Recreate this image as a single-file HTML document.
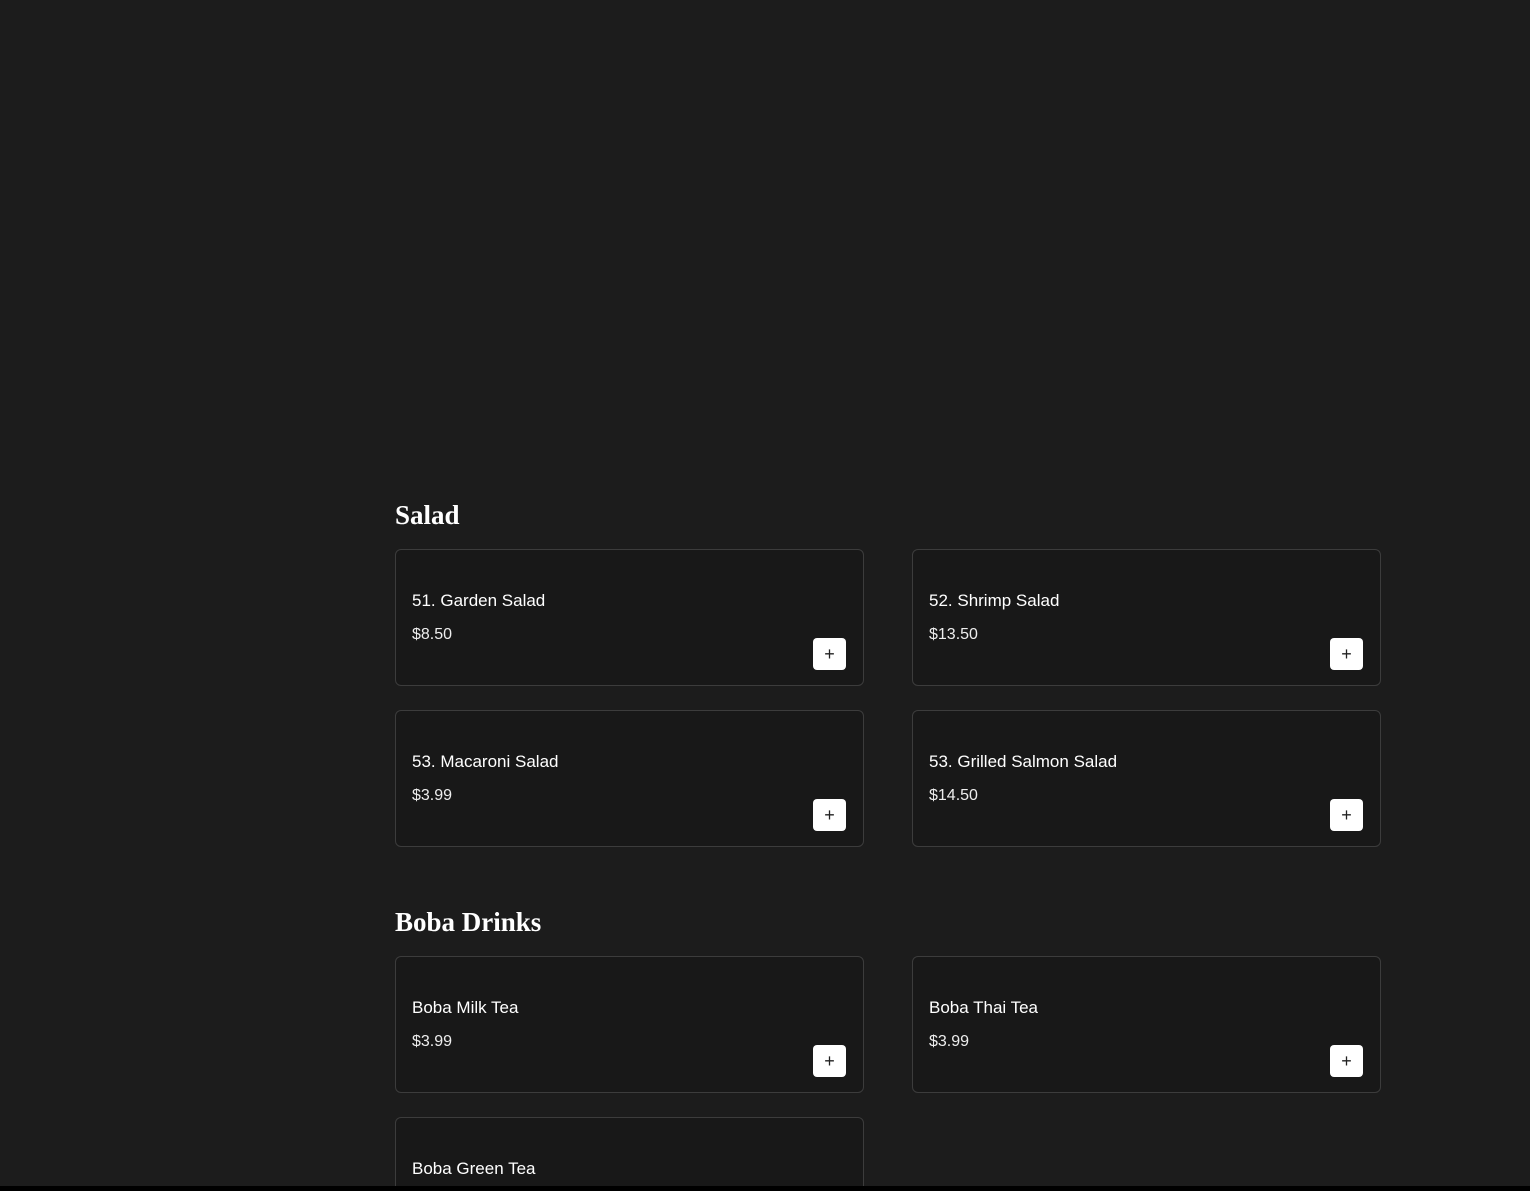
<!DOCTYPE html>
<html style="height:1191px;overflow:hidden"><head><style>
body{margin:0;width:1530px;height:1191px;background:#1c1c1c;position:relative;overflow:hidden;font-family:"Liberation Sans",sans-serif;color:#fff}
h2{position:absolute;left:395px;margin:0;font-family:"Liberation Serif",serif;font-weight:bold;font-size:27px;line-height:30px}
.c{position:absolute;width:467px;height:135px;background:#181818;border:1px solid #3c3c3c;border-radius:6px;box-sizing:content-box}
.t{position:absolute;left:16px;top:41px;font-size:17px}
.p{position:absolute;left:16px;top:76px;font-size:16px;color:#eee}
.b{position:absolute;left:417px;top:88px;width:33px;height:32px;background:#fff;border-radius:4px;color:#222;font-size:18px;text-align:center;line-height:32px}
.bar{position:absolute;left:0;top:1186px;width:1530px;height:5px;background:#000}
</style></head><body>
<h2 style="top:500px">Salad</h2>
<div class="c" style="left:395px;top:549px"><div class="t">51. Garden Salad</div><div class="p">$8.50</div><div class="b">+</div></div>
<div class="c" style="left:912px;top:549px"><div class="t">52. Shrimp Salad</div><div class="p">$13.50</div><div class="b">+</div></div>
<div class="c" style="left:395px;top:710px"><div class="t">53. Macaroni Salad</div><div class="p">$3.99</div><div class="b">+</div></div>
<div class="c" style="left:912px;top:710px"><div class="t">53. Grilled Salmon Salad</div><div class="p">$14.50</div><div class="b">+</div></div>
<h2 style="top:907px">Boba Drinks</h2>
<div class="c" style="left:395px;top:956px"><div class="t">Boba Milk Tea</div><div class="p">$3.99</div><div class="b">+</div></div>
<div class="c" style="left:912px;top:956px"><div class="t">Boba Thai Tea</div><div class="p">$3.99</div><div class="b">+</div></div>
<div class="c" style="left:395px;top:1117px;height:80px"><div class="t">Boba Green Tea</div></div>
<div class="bar"></div>
</body></html>
